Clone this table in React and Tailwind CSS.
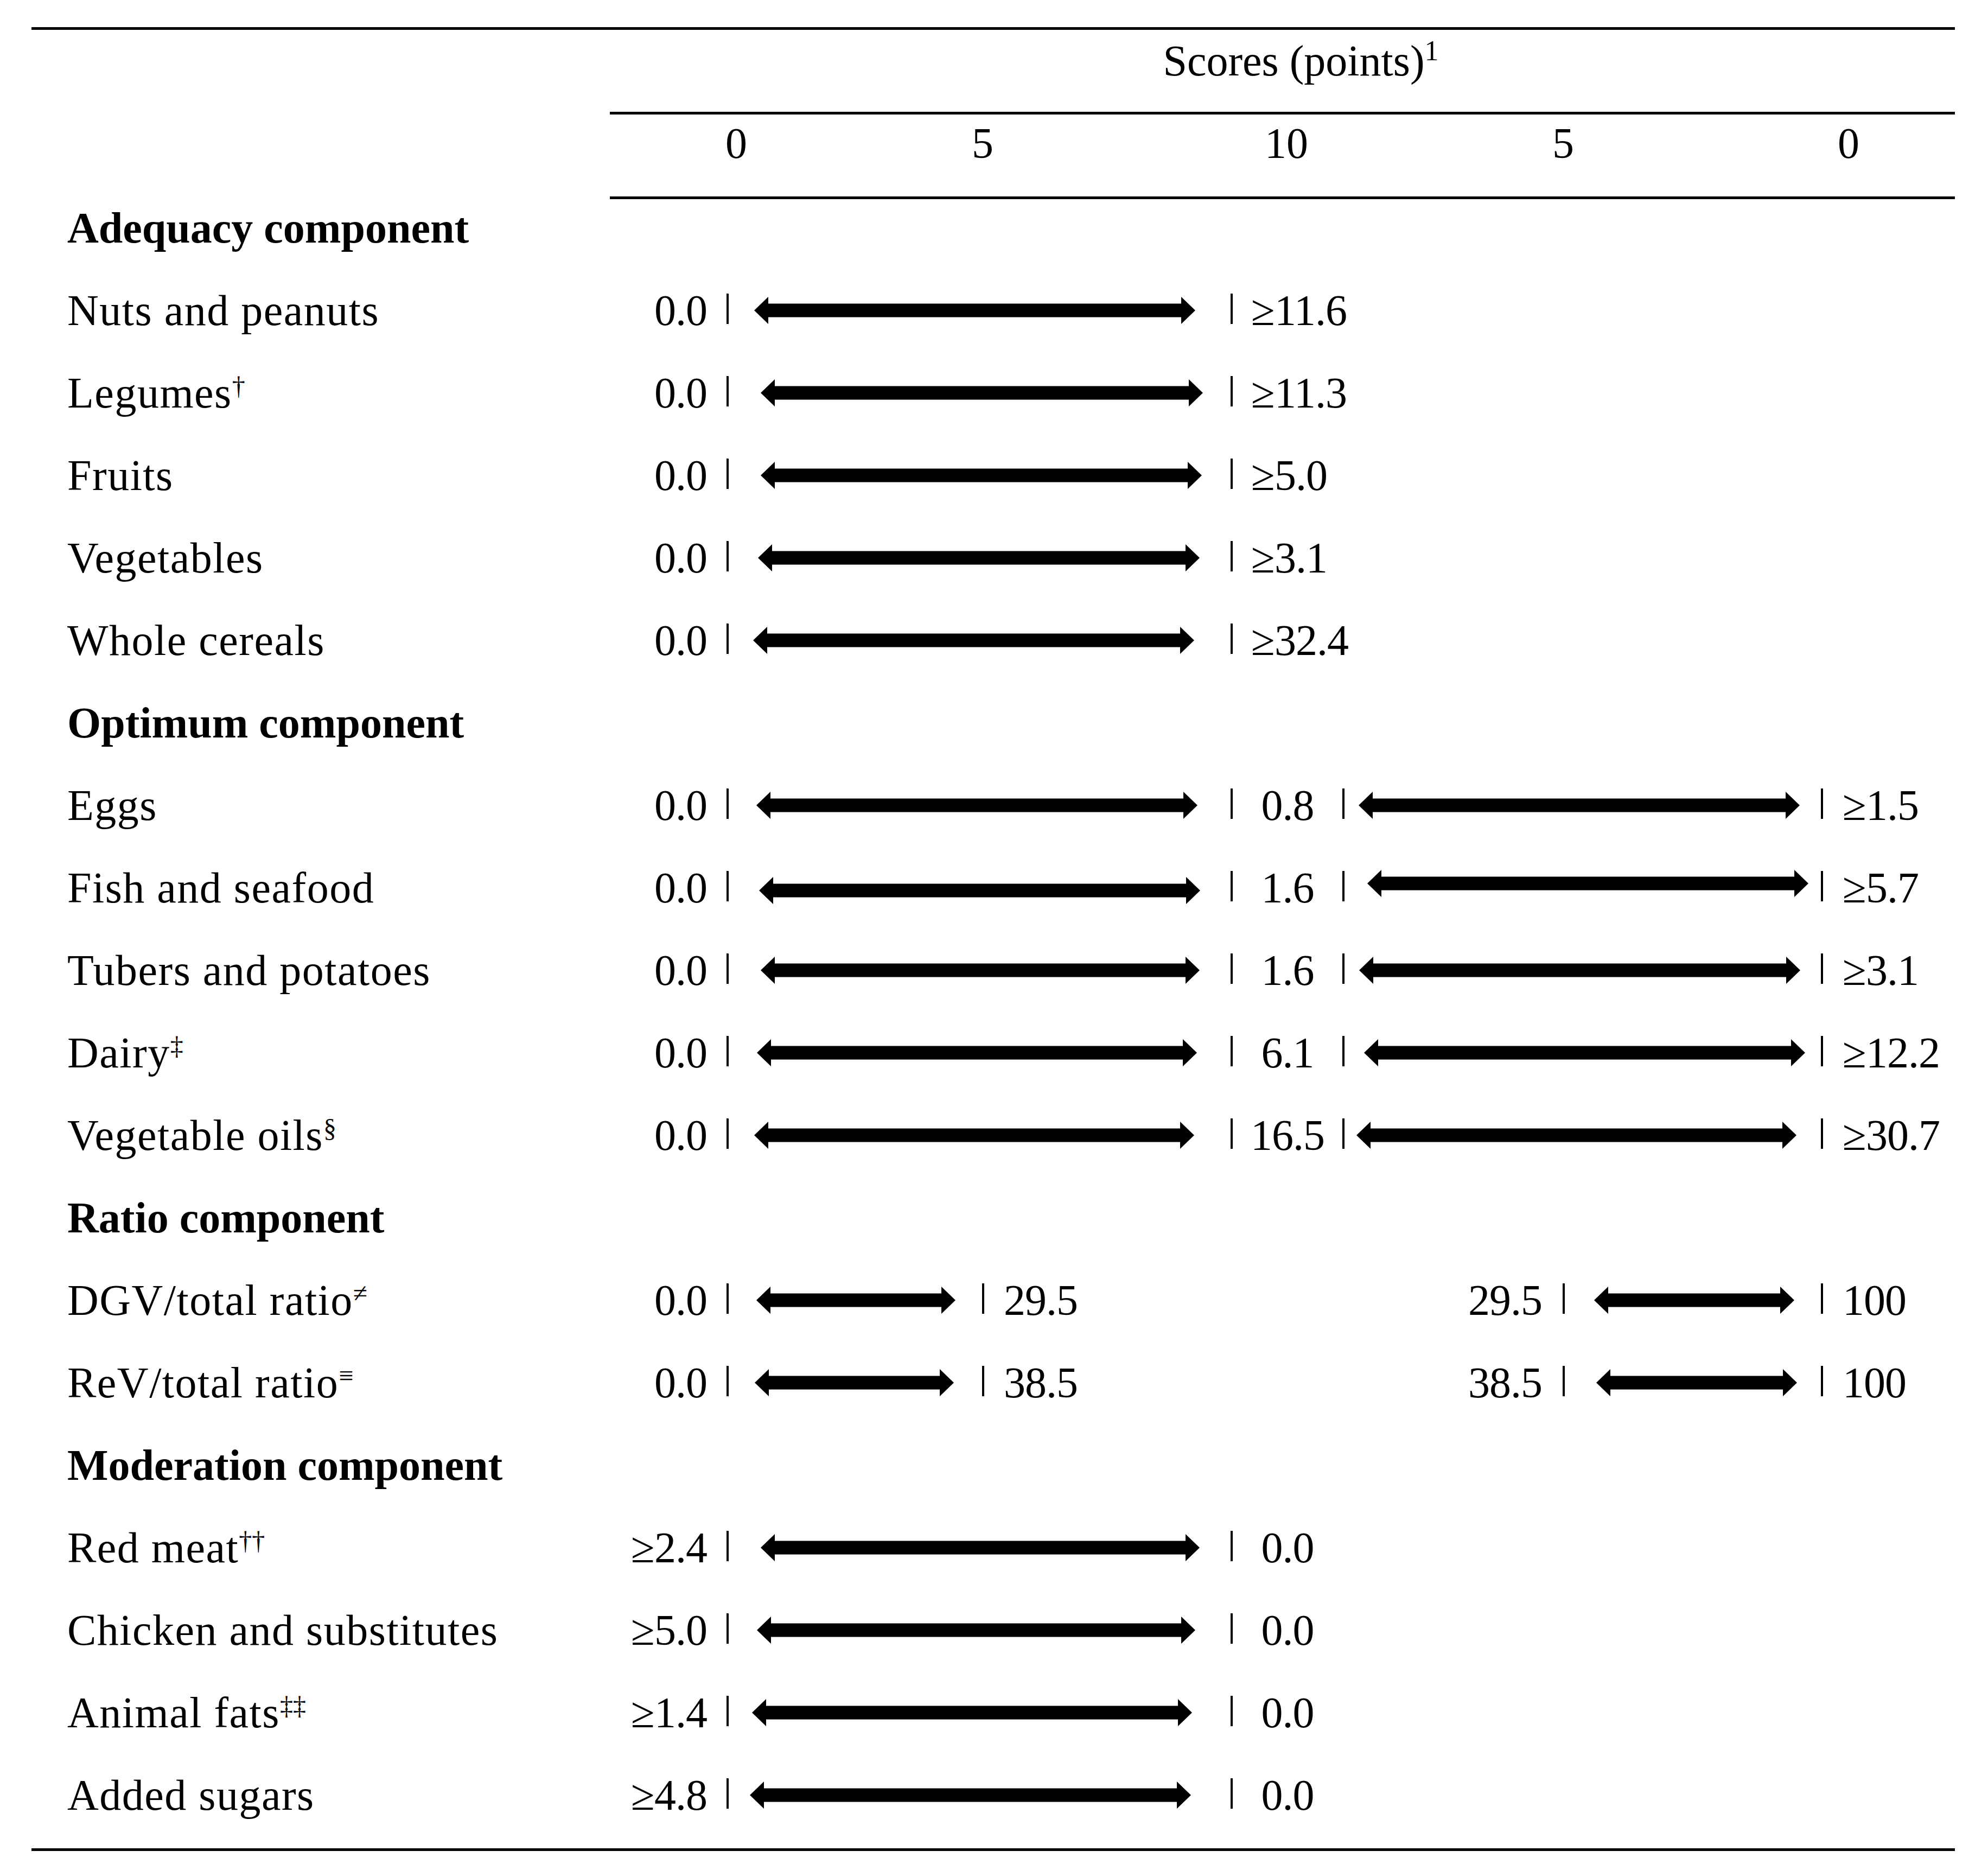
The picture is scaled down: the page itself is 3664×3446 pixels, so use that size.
import React from "react";

const ADEQ = [
  { label: "Nuts and peanuts", a: [1390, 2203], right: "≥11.6" },
  { label: "Legumes", sup: "†", a: [1402, 2217], right: "≥11.3" },
  { label: "Fruits", a: [1402, 2215], right: "≥5.0" },
  { label: "Vegetables", a: [1397, 2211], right: "≥3.1" },
  { label: "Whole cereals", a: [1388, 2201], right: "≥32.4" },
];

const OPT = [
  { label: "Eggs", a: [1394, 2207], mid: "0.8", b: [2504, 3317], right: "≥1.5" },
  { label: "Fish and seafood", a: [1399, 2212], ady: 5, mid: "1.6", b: [2520, 3333], bdy: -8, right: "≥5.7" },
  { label: "Tubers and potatoes", a: [1402, 2211], mid: "1.6", b: [2505, 3318], right: "≥3.1" },
  { label: "Dairy", sup: "‡", a: [1395, 2206], mid: "6.1", b: [2514, 3327], right: "≥12.2" },
  { label: "Vegetable oils", sup: "§", a: [1390, 2201], mid: "16.5", b: [2500, 3311], right: "≥30.7" },
];

const RATIO = [
  { label: "DGV/total ratio", sup: "≠", a: [1394, 1761], v: "29.5", b: [2938, 3307], right: "100" },
  { label: "ReV/total ratio", sup: "≡", a: [1391, 1758], v: "38.5", b: [2942, 3312], right: "100" },
];

const MOD = [
  { label: "Red meat", sup: "††", left: "≥2.4", a: [1402, 2211] },
  { label: "Chicken and substitutes", left: "≥5.0", a: [1395, 2203] },
  { label: "Animal fats", sup: "‡‡", left: "≥1.4", a: [1386, 2197] },
  { label: "Added sugars", left: "≥4.8", a: [1382, 2195] },
];

function Arrow({ from, to, ml, dy = 0 }) {
  const w = to - from;
  const h = 50;
  const hl = 26;
  const pts = [
    [0, 25],
    [hl, 0],
    [hl, 12.5],
    [w - hl, 12.5],
    [w - hl, 0],
    [w, 25],
    [w - hl, 50],
    [w - hl, 37.5],
    [hl, 37.5],
    [hl, 50],
  ]
    .map((p) => p.join(","))
    .join(" ");
  return (
    <svg
      width={w}
      height={h}
      viewBox={`0 0 ${w} ${h}`}
      className="shrink-0 block"
      style={{ marginLeft: ml, transform: `translateY(${dy}px)` }}
    >
      <polygon points={pts} fill="#000" />
    </svg>
  );
}

function Bar({ ml = 0 }) {
  return <div className="w-[4px] h-[56px] bg-black shrink-0 mb-[6px]" style={{ marginLeft: ml }} />;
}

function Label({ text, sup }) {
  return (
    <div className="w-[1066px] shrink-0 pl-[66px] whitespace-nowrap tracking-[1.5px]">
      {text}
      {sup ? <span className="text-[48px] align-[24px] leading-none tracking-normal">{sup}</span> : null}
    </div>
  );
}

function Heading({ text, first }) {
  return (
    <div className={first ? "flex h-[129px] items-start pt-[13px]" : "flex h-[152px] items-center"}>
      <div className="pl-[66px] font-bold whitespace-nowrap">{text}</div>
    </div>
  );
}

function Val({ children, className = "" }) {
  return <div className={`whitespace-nowrap tracking-[-1px] ${className}`}>{children}</div>;
}

function LeftStart({ value, a }) {
  return (
    <>
      <Val className="w-[179px] shrink-0 text-right">{value}</Val>
      <Bar ml={36} />
      <Arrow from={a[0]} to={a[1]} ml={a[0] - 1343} dy={0} />
    </>
  );
}

function AdeqRow({ r }) {
  return (
    <div className="flex h-[152px] items-center">
      <Label text={r.label} sup={r.sup} />
      <div className="flex items-center">
        <LeftStart value="0.0" a={r.a} />
        <Bar ml={2268 - r.a[1]} />
        <Val className="ml-[34px]">{r.right}</Val>
      </div>
    </div>
  );
}

function OptRow({ r }) {
  return (
    <div className="flex h-[152px] items-center">
      <Label text={r.label} sup={r.sup} />
      <div className="flex items-center">
        <Val className="w-[179px] shrink-0 text-right">0.0</Val>
        <Bar ml={36} />
        <Arrow from={r.a[0]} to={r.a[1]} ml={r.a[0] - 1343} dy={r.ady || 0} />
        <Bar ml={2268 - r.a[1]} />
        <Val className="w-[202px] shrink-0 text-center">{r.mid}</Val>
        <Bar />
        <Arrow from={r.b[0]} to={r.b[1]} ml={r.b[0] - 2478} dy={r.bdy || 0} />
        <Bar ml={3356 - r.b[1]} />
        <Val className="ml-[36px]">{r.right}</Val>
      </div>
    </div>
  );
}

function RatioRow({ r }) {
  return (
    <div className="flex h-[152px] items-center">
      <Label text={r.label} sup={r.sup} />
      <div className="flex items-center">
        <LeftStart value="0.0" a={r.a} />
        <Bar ml={1810 - r.a[1]} />
        <div className="w-[1028px] shrink-0 flex justify-between whitespace-nowrap tracking-[-1px]">
          <span className="pl-[36px]">{r.v}</span>
          <span>{r.v}</span>
        </div>
        <Bar ml={38} />
        <Arrow from={r.b[0]} to={r.b[1]} ml={r.b[0] - 2884} />
        <Bar ml={3356 - r.b[1]} />
        <Val className="ml-[36px]">{r.right}</Val>
      </div>
    </div>
  );
}

function ModRow({ r }) {
  return (
    <div className="flex h-[152px] items-center">
      <Label text={r.label} sup={r.sup} />
      <div className="flex items-center">
        <LeftStart value={r.left} a={r.a} />
        <Bar ml={2268 - r.a[1]} />
        <Val className="w-[202px] shrink-0 text-center">0.0</Val>
      </div>
    </div>
  );
}

export default function App() {
  return (
    <div className="w-[3664px] min-h-[3446px] bg-white text-black font-['Liberation_Serif','Times_New_Roman',serif] text-[80px] leading-none pt-[50px]">
      <div className="ml-[58px] w-[3545px] border-t-[5px] border-b-[5px] border-black">
        {/* header row 1 */}
        <div className="flex">
          <div className="w-[1066px] shrink-0" />
          <div className="flex-1 h-[156px] border-b-[5px] border-black pt-[13px] pl-[68px] text-center whitespace-nowrap">
            Scores (points)<span className="text-[52px] align-[28px] leading-none">1</span>
          </div>
        </div>
        {/* header row 2 */}
        <div className="flex">
          <div className="w-[1066px] shrink-0" />
          <div className="flex-1 h-[156px] border-b-[5px] border-black pt-[13px] flex">
            <div className="ml-[183px] w-[100px] text-center">0</div>
            <div className="ml-[354px] w-[100px] text-center">5</div>
            <div className="ml-[460px] w-[100px] text-center">10</div>
            <div className="ml-[410px] w-[100px] text-center">5</div>
            <div className="ml-[426px] w-[100px] text-center">0</div>
          </div>
        </div>
        {/* body */}
        <div className="pb-[22px]">
          <Heading text="Adequacy component" first />
          {ADEQ.map((r) => (
            <AdeqRow key={r.label} r={r} />
          ))}
          <Heading text="Optimum component" />
          {OPT.map((r) => (
            <OptRow key={r.label} r={r} />
          ))}
          <Heading text="Ratio component" />
          {RATIO.map((r) => (
            <RatioRow key={r.label} r={r} />
          ))}
          <Heading text="Moderation component" />
          {MOD.map((r) => (
            <ModRow key={r.label} r={r} />
          ))}
        </div>
      </div>
    </div>
  );
}
